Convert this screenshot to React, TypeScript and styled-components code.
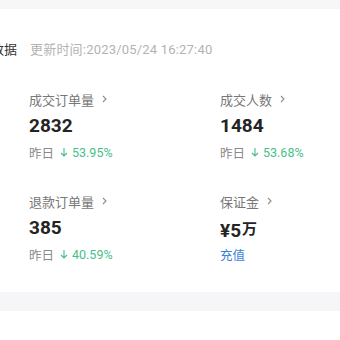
import styled, { createGlobalStyle } from "styled-components";

const GlobalStyle = createGlobalStyle`
  body {
    margin: 0;
    background: #ffffff;
    font-family: Roboto, "Noto Sans CJK SC", sans-serif;
  }
`;

const Page = styled.div`
  width: 340px;
  height: 340px;
  overflow: hidden;
  display: flex;
  flex-direction: column;
`;

const TopStrip = styled.div`
  height: 9px;
  background: #f7f7f8;
`;

const Card = styled.section`
  padding: 30px 0 29px;
  display: flex;
  flex-direction: column;
  gap: 33px;
`;

const Header = styled.div`
  display: flex;
  align-items: center;
  gap: 13px;
  height: 18px;
`;

const Title = styled.div`
  width: 17px;
  display: flex;
  justify-content: flex-end;
  overflow: hidden;
  white-space: nowrap;
  font-size: 13px;
  color: #333;
  font-family: "Noto Sans CJK SC", sans-serif;
`;

const UpdateTime = styled.span`
  font-size: 13px;
  letter-spacing: 0.2px;
  color: #b3b3b3;
  font-family: Roboto, "Noto Sans CJK SC", sans-serif;
`;

const Grid = styled.div`
  display: grid;
  grid-template-columns: 191px 1fr;
  row-gap: 31px;
  padding-left: 29px;
`;

const Item = styled.div`
  display: flex;
  flex-direction: column;
`;

const Label = styled.div`
  display: flex;
  align-items: center;
  gap: 8px;
  height: 18px;
  font-size: 13px;
  color: #777;
  font-family: "Noto Sans CJK SC", sans-serif;
`;

const Value = styled.div`
  margin-top: 6px;
  height: 24px;
  line-height: 24px;
  font-size: 19px;
  font-weight: 700;
  color: #242424;
  font-family: Roboto, "Noto Sans CJK SC", sans-serif;
`;

const Unit = styled.span`
  font-size: 15px;
  vertical-align: 3px;
  margin-left: 1px;
  font-family: "Noto Sans CJK SC", sans-serif;
`;

const Sub = styled.div`
  margin-top: 5px;
  height: 18px;
  display: flex;
  align-items: center;
  gap: 6px;
  font-size: 12px;
`;

const Muted = styled.span`
  color: #8a8a8a;
  font-size: 12.5px;
  font-family: "Noto Sans CJK SC", sans-serif;
`;

const Change = styled.span`
  display: flex;
  align-items: center;
  gap: 4px;
  color: #45bf8a;
  font-family: Roboto, sans-serif;
  font-size: 12.5px;
`;

const Link = styled.span`
  color: #3a7fd5;
  font-size: 12.5px;
  font-family: "Noto Sans CJK SC", sans-serif;
`;

const BottomStrip = styled.div`
  height: 19px;
  background: #f6f6f8;
`;

const Chevron = () => (
  <svg width="5" height="8" viewBox="0 0 5 8">
    <path d="M1 1 L4 4 L1 7" fill="none" stroke="#8c8c8c" strokeWidth="1.1" />
  </svg>
);

const DownArrow = () => (
  <svg width="8" height="10" viewBox="0 0 8 10">
    <path d="M4 1 V9 M1 6 L4 9 L7 6" fill="none" stroke="#45bf8a" strokeWidth="1.1" />
  </svg>
);

type Stat = {
  label: string;
  value: string;
  unit?: string;
  change?: string;
  link?: string;
};

const stats: Stat[] = [
  { label: "成交订单量", value: "2832", change: "53.95%" },
  { label: "成交人数", value: "1484", change: "53.68%" },
  { label: "退款订单量", value: "385", change: "40.59%" },
  { label: "保证金", value: "¥5", unit: "万", link: "充值" },
];

export default function App() {
  return (
    <Page>
      <GlobalStyle />
      <TopStrip />
      <Card>
        <Header>
          <Title>数据</Title>
          <UpdateTime>更新时间:2023/05/24 16:27:40</UpdateTime>
        </Header>
        <Grid>
          {stats.map((s) => (
            <Item key={s.label}>
              <Label>
                {s.label}
                <Chevron />
              </Label>
              <Value>
                {s.value}
                {s.unit && <Unit>{s.unit}</Unit>}
              </Value>
              <Sub>
                {s.change ? (
                  <>
                    <Muted>昨日</Muted>
                    <Change>
                      <DownArrow />
                      {s.change}
                    </Change>
                  </>
                ) : (
                  <Link>{s.link}</Link>
                )}
              </Sub>
            </Item>
          ))}
        </Grid>
      </Card>
      <BottomStrip />
    </Page>
  );
}
